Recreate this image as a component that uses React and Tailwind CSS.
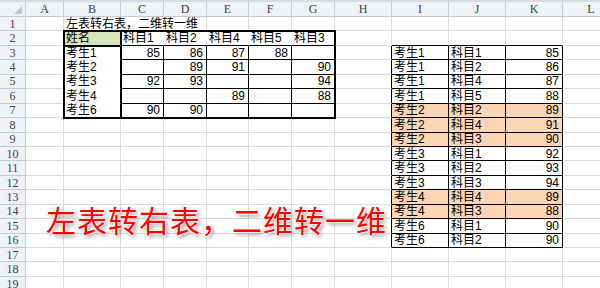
import React from 'react'

const COLS = ['A', 'B', 'C', 'D', 'E', 'F', 'G', 'H', 'I', 'J', 'K', 'L']
const ROWS = Array.from({ length: 19 }, (_, i) => i + 1)

const GRID =
  'grid grid-cols-[26px_38px_57px_43px_43px_42px_43px_43px_57px_57px_57px_57px_57px] grid-rows-[15px_repeat(19,14.44px)]'

const leftTable = [
  ['姓名', '科目1', '科目2', '科目4', '科目5', '科目3'],
  ['考生1', 85, 86, 87, 88, ''],
  ['考生2', '', 89, 91, '', 90],
  ['考生3', 92, 93, '', '', 94],
  ['考生4', '', '', 89, '', 88],
  ['考生6', 90, 90, '', '', ''],
]

const rightTable = [
  ['考生1', '科目1', 85, false],
  ['考生1', '科目2', 86, false],
  ['考生1', '科目4', 87, false],
  ['考生1', '科目5', 88, false],
  ['考生2', '科目2', 89, true],
  ['考生2', '科目4', 91, true],
  ['考生2', '科目3', 90, true],
  ['考生3', '科目1', 92, false],
  ['考生3', '科目2', 93, false],
  ['考生3', '科目3', 94, false],
  ['考生4', '科目4', 89, true],
  ['考生4', '科目3', 88, true],
  ['考生6', '科目1', 90, false],
  ['考生6', '科目2', 90, false],
]

const fillClass = {
  none: '',
  white: 'bg-white',
  green: 'bg-[#d7e4bc]',
  orange: 'bg-[#fcd5b4]',
}

const rightClass = {
  grid: 'border-r-[#dadcdd]',
  black: 'border-r-black',
  none: 'border-r-transparent',
}

const bottomClass = {
  grid: 'border-b-[#dadcdd]',
  black: 'border-b-black',
  none: 'border-b-transparent',
}

function buildCell(ci, r) {
  const cell = { text: '', num: false, fill: 'none', right: 'grid', bottom: 'grid' }

  // row 1 title overflows into C1 and D1
  if (r === 1 && ci === 1) cell.text = '左表转右表，二维转一维'
  if (r === 1 && (ci === 1 || ci === 2)) cell.right = 'none'

  // left table B2:G7
  if (ci >= 1 && ci <= 6 && r >= 2 && r <= 7) {
    const v = leftTable[r - 2][ci - 1]
    cell.text = v
    cell.num = typeof v === 'number'
    if (r === 2 && ci === 1) {
      cell.fill = 'green'
      cell.right = 'none'
      cell.bottom = 'none'
    } else if (r === 2) {
      cell.fill = 'white'
      cell.right = 'none'
      cell.bottom = 'black'
    } else if (ci === 1) {
      cell.fill = 'white'
      cell.right = 'none'
      cell.bottom = 'none'
    } else {
      cell.right = 'black'
      cell.bottom = 'black'
    }
  }

  // right table I3:K16
  if (ci === 7 && r >= 3 && r <= 16) cell.right = 'black'
  if (ci >= 8 && ci <= 10 && r === 2) cell.bottom = 'black'
  if (ci >= 8 && ci <= 10 && r >= 3 && r <= 16) {
    const row = rightTable[r - 3]
    const v = row[ci - 8]
    cell.text = v
    cell.num = typeof v === 'number'
    cell.fill = row[3] ? 'orange' : 'none'
    cell.right = 'black'
    cell.bottom = 'black'
  }

  return cell
}

function Cell({ ci, r }) {
  const cell = buildCell(ci, r)
  return (
    <div
      className={`flex items-center border-r border-b whitespace-nowrap text-[12px] leading-none text-black ${
        fillClass[cell.fill]
      } ${rightClass[cell.right]} ${bottomClass[cell.bottom]} ${
        cell.num
          ? "justify-end pr-[3px] font-['Liberation_Sans',sans-serif]"
          : "justify-start pl-[2px] font-['Liberation_Sans','Noto_Sans_CJK_SC',sans-serif]"
      }`}
    >
      {cell.text}
    </div>
  )
}

function CornerCell() {
  return (
    <div className="flex items-end justify-end border-r border-b border-[#c5cbd3] bg-[#eef1f5] pr-[3px] pb-[2px]">
      <svg width="8" height="8" viewBox="0 0 8 8">
        <polygon points="8,0 8,8 0,8" fill="#c3c9d1" />
      </svg>
    </div>
  )
}

export default function App() {
  return (
    <div className="relative w-[600px] h-[288px] overflow-hidden bg-white">
      <div className="h-[2px] bg-[#d9dde3]" />
      <div className="relative">
        <div className={GRID}>
          <CornerCell />
          {COLS.map(c => (
            <div
              key={c}
              className="flex items-center justify-center border-r border-b border-[#c5cbd3] bg-[#eef1f5] text-[12px] leading-none text-[#3b4656] font-['Liberation_Serif',serif]"
            >
              {c}
            </div>
          ))}

          {ROWS.map(r => (
            <React.Fragment key={r}>
              <div className="flex items-center justify-center border-r border-b border-[#c5cbd3] bg-[#eef1f5] text-[12px] leading-none text-[#3b4656] font-['Liberation_Serif',serif]">
                {r}
              </div>
              {COLS.map((c, ci) => (
                <Cell key={c} ci={ci} r={r} />
              ))}
            </React.Fragment>
          ))}
        </div>

        {/* thick outlines of the left table, laid on the same grid */}
        <div className={`absolute inset-0 pointer-events-none ${GRID}`}>
          <div className="col-start-3 col-end-9 row-start-3 row-end-9 -m-px border-2 border-black" />
          <div className="col-start-3 col-end-4 row-start-3 row-end-4 -m-px border-2 border-black" />
          <div className="col-start-3 col-end-4 row-start-4 row-end-9 -m-px border-2 border-black" />
        </div>
      </div>

      {/* text box over the sheet */}
      <div className="absolute left-[46px] top-[199px] text-[30px] leading-[40px] tracking-[1px] whitespace-nowrap text-[#ff0000] font-['Noto_Sans_CJK_SC',sans-serif] [text-shadow:0_0_2px_#fff,0_0_2px_#fff,0_0_3px_#fff,2px_2px_4px_rgba(0,0,0,0.55)]">
        左表转右表，二维转一维
      </div>
    </div>
  )
}
